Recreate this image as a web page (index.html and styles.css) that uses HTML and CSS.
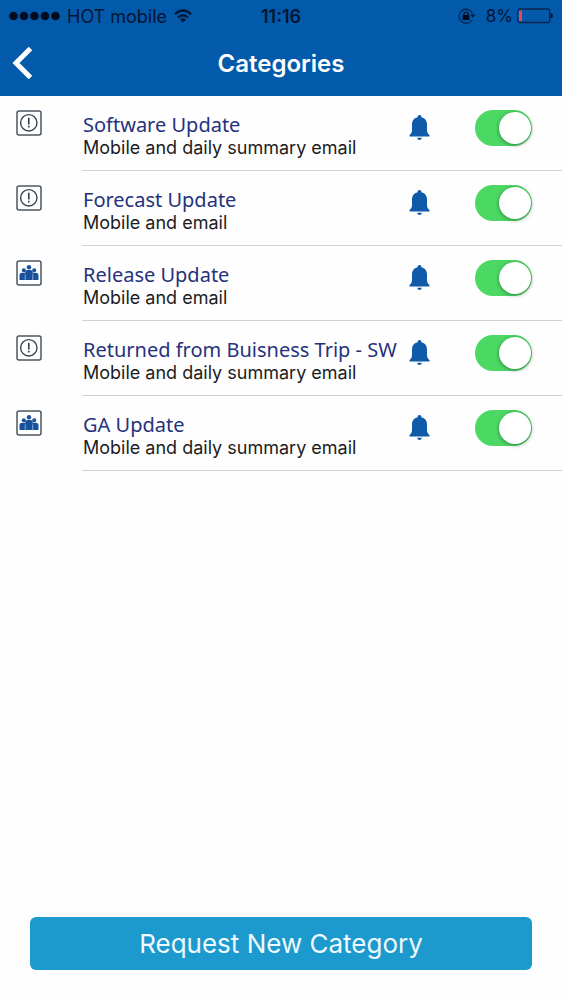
FILE: index.html
```html
<!DOCTYPE html>
<html lang="en">
<head>
<meta charset="utf-8">
<meta name="viewport" content="width=device-width, initial-scale=1">
<title>Categories</title>
<link rel="stylesheet" href="styles.css">
</head>
<body>
<svg class="defs" aria-hidden="true">
  <symbol id="alert" viewBox="0 0 26 26">
    <rect x="1" y="1" width="24" height="24" rx="2" fill="#fff" stroke="#4b5560" stroke-width="1.5"/>
    <circle cx="12.800" cy="12.800" r="8.200" fill="none" stroke="#39424c" stroke-width="1.400"/>
    <path d="M12.800 7.800v6.800M12.800 15.800v1.800" stroke="#2b333c" stroke-width="1.500"/>
  </symbol>
  <symbol id="group" viewBox="0 0 26 26">
    <rect x="1" y="1" width="24" height="24" rx="2" fill="#fff" stroke="#4b5560" stroke-width="1.500"/>
    <g fill="#17519b">
      <circle cx="13" cy="7.200" r="2.200"/>
      <circle cx="7.800" cy="10.200" r="2"/>
      <circle cx="18.200" cy="10.200" r="2"/>
      <path d="M9.200 20v-7.400q0-2.600 2.400-2.600h2.800q2.400 0 2.400 2.600V20z"/>
      <path d="M3.500 20v-4.600q0-2.600 2.600-2.600h3.200V20zM22.500 20v-4.600q0-2.600-2.600-2.600h-3.200V20z"/>
    </g>
    <path d="M9.200 14.500V20M16.800 14.500V20" stroke="#b5c9e2" stroke-width=".6"/>
  </symbol>
  <symbol id="bell" viewBox="0 0 20 25">
    <path fill="#0f5aa9" d="M10 0a1.900 1.900 0 0 1 1.900 2.200C15.800 3.100 17.500 6 17.500 9.500v5.500c0 2.200.7 3.500 2.500 5v1.400H0V20c1.800-1.500 2.500-2.800 2.500-5V9.500C2.500 6 4.200 3.100 8.100 2.200A1.900 1.900 0 0 1 10 0zM7.600 22.700h4.800Q12 25 10 25t-2.400-2.300z"/>
  </symbol>
</svg>

<div class="screen">
  <header class="top">
    <div class="status">
      <div class="carrier">
        <svg width="51" height="10" viewBox="0 0 51 10" aria-hidden="true"><g fill="#020c20"><circle cx="4.500" cy="5" r="4.300"/><circle cx="15" cy="5" r="4.300"/><circle cx="25.500" cy="5" r="4.300"/><circle cx="36" cy="5" r="4.300"/><circle cx="46.500" cy="5" r="4.300"/></g></svg>
        <span>HOT mobile</span>
        <svg width="18" height="14" viewBox="0 0 18 14" aria-hidden="true"><g fill="none" stroke="#031633" stroke-width="2.200"><path d="M1 5.200q8-7.400 16 0"/><path d="M4 8.500q5-4.500 10 0"/></g><path fill="#031633" d="M9 13.600l-3-3q3-2.600 6 0z"/></svg>
      </div>
      <time class="clock">11:16</time>
      <div class="power">
        <svg width="18" height="16" viewBox="0 0 18 16" aria-hidden="true"><path d="M14.500 5.500A7 7 0 1 0 14 12" fill="none" stroke="#04234f" stroke-width="1.300"/><path d="M12.300 6.500h5.200l-2.600 3.200z" fill="#04173a"/><rect x="4.500" y="7" width="7" height="5" rx=".6" fill="#020c20"/><path d="M6 7.500V6a2 2 0 0 1 4 0v1.500" fill="none" stroke="#020c20" stroke-width="1.200"/></svg>
        <span class="percent">8%</span>
        <svg width="36" height="16" viewBox="0 0 36 16" aria-hidden="true"><rect x=".7" y="1" width="32" height="13.500" rx="2" fill="none" stroke="#08264f" stroke-width="1.300"/><rect x="2" y="2.500" width="3" height="10.500" fill="#e04a55"/><path d="M33.500 5q2.500.5 2.500 2.800t-2.500 2.700z" fill="#04173a"/></svg>
      </div>
    </div>
    <div class="nav">
      <button class="back" aria-label="Back"><svg width="21" height="32" viewBox="0 0 21 32" aria-hidden="true"><path d="M18.500 1.500L4 16l14.500 14.500" fill="none" stroke="#fff" stroke-width="5"/></svg></button>
      <h1 class="heading">Categories</h1>
    </div>
  </header>

  <main class="content">
    <ul class="list">
      <li class="row">
        <svg class="kind" aria-hidden="true"><use href="#alert"/></svg>
        <div class="body">
          <label class="text" for="c1"><span class="name">Software Update</span><span class="detail">Mobile and daily summary email</span></label>
          <svg class="bell" aria-hidden="true"><use href="#bell"/></svg>
          <input class="switch" id="c1" type="checkbox" checked>
        </div>
      </li>
      <li class="row">
        <svg class="kind" aria-hidden="true"><use href="#alert"/></svg>
        <div class="body">
          <label class="text" for="c2"><span class="name">Forecast Update</span><span class="detail">Mobile and email</span></label>
          <svg class="bell" aria-hidden="true"><use href="#bell"/></svg>
          <input class="switch" id="c2" type="checkbox" checked>
        </div>
      </li>
      <li class="row">
        <svg class="kind" aria-hidden="true"><use href="#group"/></svg>
        <div class="body">
          <label class="text" for="c3"><span class="name">Release Update</span><span class="detail">Mobile and email</span></label>
          <svg class="bell" aria-hidden="true"><use href="#bell"/></svg>
          <input class="switch" id="c3" type="checkbox" checked>
        </div>
      </li>
      <li class="row">
        <svg class="kind" aria-hidden="true"><use href="#alert"/></svg>
        <div class="body">
          <label class="text" for="c4"><span class="name">Returned from Buisness Trip - SW</span><span class="detail">Mobile and daily summary email</span></label>
          <svg class="bell" aria-hidden="true"><use href="#bell"/></svg>
          <input class="switch" id="c4" type="checkbox" checked>
        </div>
      </li>
      <li class="row">
        <svg class="kind" aria-hidden="true"><use href="#group"/></svg>
        <div class="body">
          <label class="text" for="c5"><span class="name">GA Update</span><span class="detail">Mobile and daily summary email</span></label>
          <svg class="bell" aria-hidden="true"><use href="#bell"/></svg>
          <input class="switch" id="c5" type="checkbox" checked>
        </div>
      </li>
    </ul>
  </main>

  <footer class="actions">
    <button class="request">Request New Category</button>
  </footer>
</div>
</body>
</html>
```

FILE: styles.css
```css
* {
  box-sizing: border-box;
}

body {
  margin: 0;
  background: #fefefe;
  font-family: Inter, "Liberation Sans", sans-serif;
}

.defs {
  display: none;
}

.screen {
  display: flex;
  flex-direction: column;
  min-height: 100vh;
  padding-right: 1px;
}

.top {
  background: #0359aa;
  padding-bottom: 8px;
}

.status {
  display: grid;
  grid-template-columns: 1fr auto 1fr;
  align-items: center;
  height: 32px;
  padding: 0 9px;
  color: #031633;
  font-size: 18px;
}

.carrier,
.power {
  display: flex;
  align-items: center;
  gap: 7px;
}

.power {
  justify-content: flex-end;
  gap: 4px;
}

.percent {
  margin-left: 6px;
  font-size: 17px;
}

.clock {
  font-weight: 600;
}

.nav {
  display: grid;
  grid-template-columns: 48px 1fr 48px;
  align-items: center;
  height: 56px;
  padding-top: 6px;
}

.back {
  display: flex;
  padding: 0 0 0 12px;
  border: 0;
  background: none;
}

.heading {
  margin: 0;
  color: #fff;
  font-size: 24px;
  font-weight: 600;
  text-align: center;
}

.content {
  flex: 1;
}

.list {
  margin: 0;
  padding: 0;
  list-style: none;
}

.row {
  display: flex;
  padding-left: 16px;
}

.kind {
  flex: none;
  width: 26px;
  height: 26px;
  margin: 14px 40px 0 0;
}

.body {
  flex: 1;
  display: flex;
  align-items: flex-start;
  min-width: 0;
  height: 75px;
  padding-right: 30px;
  border-bottom: 1px solid #d0d0d6;
}

.text {
  flex: 1;
  padding: 16px 0 0 1px;
  white-space: nowrap;
}

.name,
.detail {
  display: block;
}

.name {
  color: #26327c;
  font-family: "Noto Sans", sans-serif;
  font-size: 20px;
  line-height: 25px;
}

.detail {
  color: #1c1c1e;
  font-size: 18px;
  line-height: 22px;
}

.bell {
  flex: none;
  width: 21px;
  height: 25px;
  margin: 19px 45px 0 8px;
}

.switch {
  appearance: none;
  flex: none;
  display: flex;
  justify-content: flex-end;
  width: 57px;
  height: 36px;
  margin: 14px 0 0;
  padding: 2px 1px;
  border-radius: 18px;
  background: #4bd964;
}

.switch::before {
  content: "";
  width: 32px;
  height: 32px;
  border-radius: 50%;
  background: #fff;
  box-shadow: 0 1px 4px rgba(0, 0, 0, 0.4);
}

.switch:not(:checked) {
  justify-content: flex-start;
  background: #d8d8dc;
}

.actions {
  padding: 0 30px 30px;
}

.request {
  width: 100%;
  height: 53px;
  border: 0;
  border-radius: 6px;
  background: #1c99cd;
  color: #eefaff;
  font-family: inherit;
  font-size: 26px;
}
```
